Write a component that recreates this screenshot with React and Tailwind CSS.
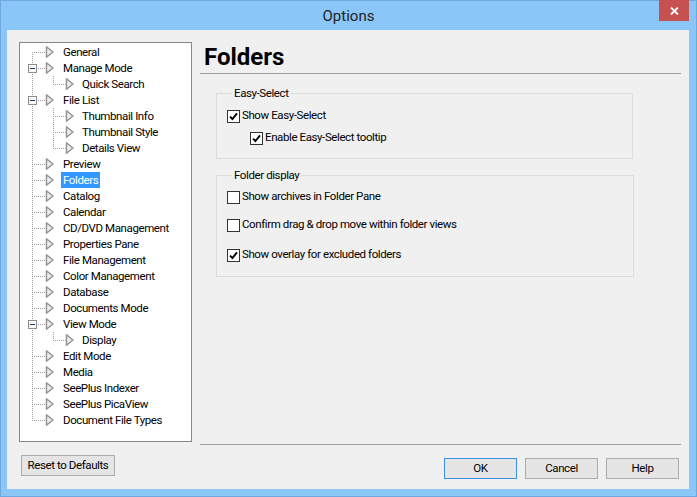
import React from 'react';

const treeItems = [
  { label: 'General', level: 0, first: true },
  { label: 'Manage Mode', level: 0, expanded: true },
  { label: 'Quick Search', level: 1, lastChild: true },
  { label: 'File List', level: 0, expanded: true },
  { label: 'Thumbnail Info', level: 1 },
  { label: 'Thumbnail Style', level: 1 },
  { label: 'Details View', level: 1, lastChild: true },
  { label: 'Preview', level: 0 },
  { label: 'Folders', level: 0, selected: true },
  { label: 'Catalog', level: 0 },
  { label: 'Calendar', level: 0 },
  { label: 'CD/DVD Management', level: 0 },
  { label: 'Properties Pane', level: 0 },
  { label: 'File Management', level: 0 },
  { label: 'Color Management', level: 0 },
  { label: 'Database', level: 0 },
  { label: 'Documents Mode', level: 0 },
  { label: 'View Mode', level: 0, expanded: true },
  { label: 'Display', level: 1, lastChild: true },
  { label: 'Edit Mode', level: 0 },
  { label: 'Media', level: 0 },
  { label: 'SeePlus Indexer', level: 0 },
  { label: 'SeePlus PicaView', level: 0 },
  { label: 'Document File Types', level: 0, last: true },
];

const dot = { stroke: '#a0a0a0', strokeWidth: 1, strokeDasharray: '1 1', shapeRendering: 'crispEdges' };

const PageIcon = ({ x }) => (
  <g transform={`translate(${x} 2)`}>
    <path d="M1.5 0.8 L8 6 L1.5 11.2 Z" fill="#f4f4f4" stroke="#979797" strokeWidth="1.5" strokeLinejoin="round" />
    <path d="M3.4 3.6 L5.8 6 L3.4 8.4" fill="none" stroke="#dedede" strokeWidth="1" />
  </g>
);

const Connector = ({ item }) => {
  if (item.level === 1) {
    return (
      <svg width="60" height="16" className="shrink-0">
        <line x1="12.5" y1="0" x2="12.5" y2="16" {...dot} />
        <line x1="33.5" y1="0" x2="33.5" y2={item.lastChild ? 9 : 16} {...dot} />
        <line x1="35" y1="8.5" x2="46" y2="8.5" {...dot} />
        <PageIcon x={45} />
      </svg>
    );
  }
  return (
    <svg width="41" height="16" className="shrink-0">
      <line x1="12.5" y1={item.first ? 8 : 0} x2="12.5" y2={item.last ? 9 : 16} {...dot} />
      <line x1="14" y1="8.5" x2="26" y2="8.5" {...dot} />
      {item.expanded && (
        <g>
          <rect x="8.5" y="4.5" width="8" height="8" fill="#fbfbfb" stroke="#8f8f8f" shapeRendering="crispEdges" />
          <line x1="10" y1="8.5" x2="15" y2="8.5" stroke="#1d3f7a" shapeRendering="crispEdges" />
        </g>
      )}
      <PageIcon x={25} />
    </svg>
  );
};

const Check = ({ checked }) => (
  <span className="flex h-[13px] w-[13px] shrink-0 items-center justify-center border border-[#333] bg-white">
    {checked && (
      <svg width="9" height="9" viewBox="0 0 9 9">
        <path d="M1 4.6 L3.4 7 L8 1.4" stroke="#000" strokeWidth="1.9" fill="none" />
      </svg>
    )}
  </span>
);

const CheckRow = ({ checked, children, className = '' }) => (
  <div className={`flex h-4 items-center gap-[2px] ${className}`}>
    <Check checked={checked} />
    <span>{children}</span>
  </div>
);

const Button = ({ children, w, primary }) => (
  <button
    className={`flex h-[21px] items-center justify-center border bg-[#e5e5e5] text-black ${w} ${
      primary ? 'border-[#3d8fe8]' : 'border-[#acacac]'
    }`}
  >
    {children}
  </button>
);

export default function App() {
  return (
    <div className="flex h-[497px] w-[697px] flex-col border border-[#6ea8de] bg-[#8ac6f8] font-[Roboto,sans-serif] text-[11.5px] tracking-[-0.4px] text-black">
      {/* Title bar */}
      <div className="relative flex h-[29px] shrink-0 items-center justify-center pt-[2px]">
        <span className="text-[15px] tracking-normal text-[#222]">Options</span>
        <div className="absolute right-[7px] top-[-1px] flex h-[21px] w-[30px] items-center justify-center bg-[#c75050]">
          <svg width="9" height="8" viewBox="0 0 9 8">
            <path d="M1 0.5 L8 7.5 M8 0.5 L1 7.5" stroke="#fff" strokeWidth="1.8" />
          </svg>
        </div>
      </div>

      {/* Client area */}
      <div className="ml-[6px] mr-[7px] flex h-[459px] flex-col bg-[#f0f0f0]">
        <div className="flex items-start pl-[12px] pt-[12px]">
          {/* Tree */}
          <div className="h-[400px] w-[173px] shrink-0 border border-[#828790] bg-white pt-[1px]">
            {treeItems.map((item) => (
              <div key={item.label} className="flex h-4 items-center">
                <Connector item={item} />
                <span
                  className={`flex h-4 items-center px-[2px] leading-4 ${
                    item.selected ? 'bg-[#3399ff] text-white' : ''
                  }`}
                >
                  {item.label}
                </span>
              </div>
            ))}
          </div>

          {/* Right panel */}
          <div className="ml-[8px] flex h-[403px] w-[481px] flex-col border-b border-[#a0a0a0]">
            <div className="h-[32px] shrink-0 border-b border-[#a0a0a0] pl-[4px] pt-[1px] text-[24px] font-bold leading-[28px] tracking-normal">
              Folders
            </div>

            <fieldset className="ml-[16px] mt-[11px] w-[417px] border border-[#dcdcdc] pb-[12px] pl-[10px]">
              <legend className="ml-[5px] h-4 px-[2px] leading-4">Easy-Select</legend>
              <CheckRow checked className="mt-[7px]">Show Easy-Select</CheckRow>
              <CheckRow checked className="ml-[23px] mt-[6px]">Enable Easy-Select tooltip</CheckRow>
            </fieldset>

            <fieldset className="ml-[16px] mt-[8px] w-[418px] border border-[#dcdcdc] pb-[13px] pl-[10px]">
              <legend className="ml-[5px] h-4 px-[2px] leading-4">Folder display</legend>
              <CheckRow className="mt-[6px]">Show archives in Folder Pane</CheckRow>
              <CheckRow className="mt-[12px]">Confirm drag &amp; drop move within folder views</CheckRow>
              <CheckRow checked className="mt-[14px]">Show overlay for excluded folders</CheckRow>
            </fieldset>
          </div>
        </div>

        {/* Buttons */}
        <div className="flex items-start pl-[14px] pr-[10px]">
          <div className="mt-[10px]">
            <Button w="w-[94px]">Reset to Defaults</Button>
          </div>
          <div className="ml-auto mt-[13px] flex gap-[8px]">
            <Button w="w-[73px]" primary>OK</Button>
            <Button w="w-[73px]">Cancel</Button>
            <Button w="w-[73px]">Help</Button>
          </div>
        </div>
      </div>
    </div>
  );
}
